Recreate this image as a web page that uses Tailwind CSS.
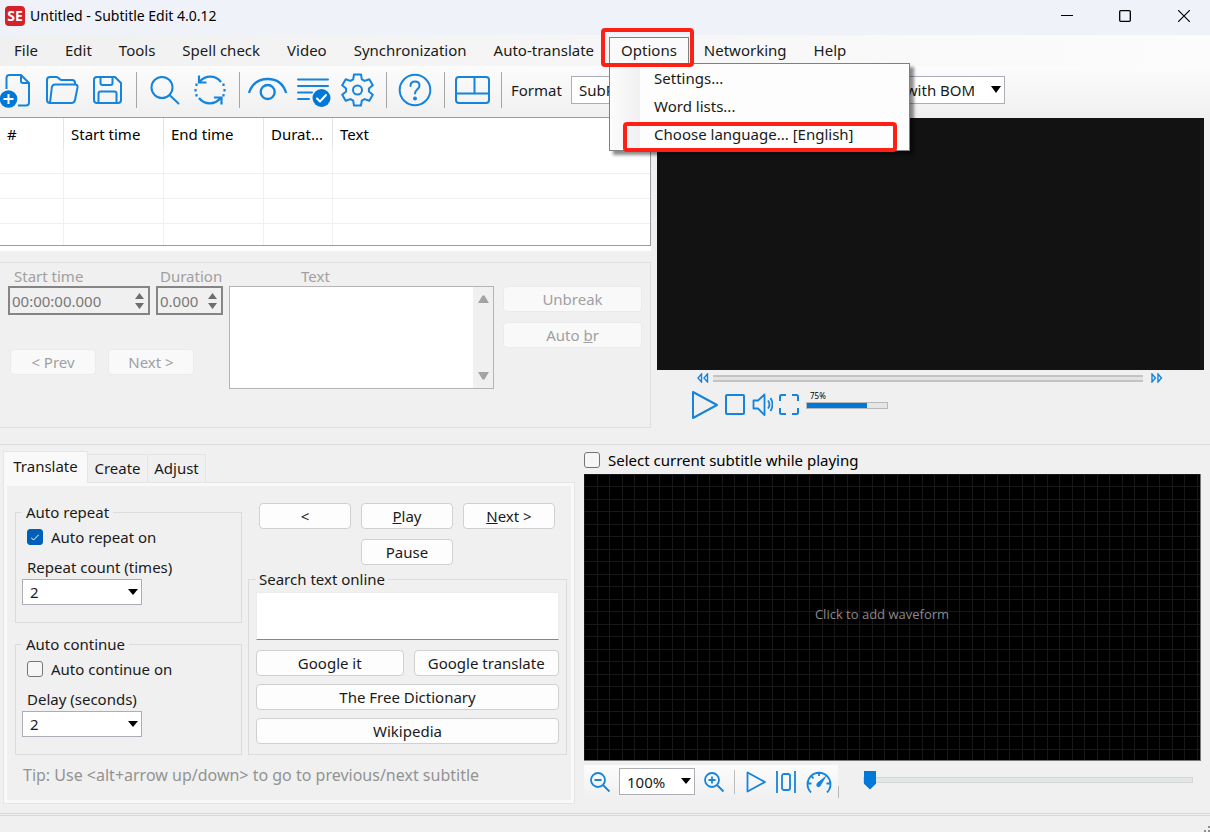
<!DOCTYPE html>
<html lang="en">
<head>
  <meta charset="UTF-8" />
  <meta name="viewport" content="width=device-width, initial-scale=1.0"/>
  <title>Untitled - Subtitle Edit 4.0.12</title>
  <script src="https://cdn.jsdelivr.net/npm/@tailwindcss/browser@4"></script>
</head>
<body class="min-h-screen flex flex-col bg-[#f0f0f0] font-['Noto_Sans',sans-serif] text-[15px] leading-5 text-[#1a1a1a]">

  <!-- Title bar -->
  <header class="h-[35px] flex items-center bg-[#eff3f9] pl-[5px]">
    <div class="size-5 shrink-0 mb-1 rounded bg-[#d3222a] text-white text-sm leading-5 font-bold text-center">SE</div>
    <h1 class="ml-[5px] mb-1 text-sm text-black">Untitled - Subtitle Edit 4.0.12</h1>
    <div class="ml-auto mb-1 flex">
      <button aria-label="Minimize" class="w-[58px] h-8 flex items-center justify-center">
        <svg class="size-3" viewBox="0 0 12 12" stroke="#000"><path d="M0 5.500h12"/></svg>
      </button>
      <button aria-label="Maximize" class="w-[58px] h-8 flex items-center justify-center">
        <svg class="size-3" viewBox="0 0 12 12" fill="none" stroke="#000" stroke-width="1.3"><rect x=".7" y=".7" width="10.6" height="10.6" rx="1"/></svg>
      </button>
      <button aria-label="Close" class="w-14 h-8 pl-1 flex items-center justify-center">
        <svg class="size-3" viewBox="0 0 12 12" stroke="#000" stroke-width="1.2"><path d="M0 0l12 12M12 0L0 12"/></svg>
      </button>
    </div>
  </header>

  <!-- Menu bar -->
  <nav class="h-[31px] flex items-center gap-[3px] bg-linear-to-r from-[#f0f0f0] to-[#fcfcfc] pl-0.5">
    <button class="h-[27px] px-3 pb-0.5">File</button>
    <button class="h-[27px] px-3 pb-0.5">Edit</button>
    <button class="h-[27px] px-3 pb-0.5">Tools</button>
    <button class="h-[27px] px-3 pb-0.5">Spell check</button>
    <button class="h-[27px] px-3 pb-0.5">Video</button>
    <button class="h-[27px] px-3 pb-0.5">Synchronization</button>
    <button class="h-[27px] px-3 pb-0.5">Auto-translate</button>
    <div class="relative">
      <button class="h-[27px] px-[11px] pb-0.5 border border-[#808080] bg-[#fafafa]">Options</button>
      <div class="absolute z-10 left-0 top-[26px] w-[301px] border border-[#808080] bg-[#fdfdfd] py-px shadow-[4px_4px_3px_rgba(0,0,0,0.45)]">
        <div class="bg-linear-to-r from-[#fcfcfc] to-[#f0f0f0] bg-size-[30px_100%] bg-no-repeat flex flex-col">
          <button class="h-7 pl-11 pb-0.5 text-left">Settings...</button>
          <button class="h-7 pl-11 pb-0.5 text-left">Word lists...</button>
          <button class="h-7 pl-11 pb-0.5 text-left">Choose language... [English]</button>
        </div>
        <div class="absolute left-[13px] right-3 bottom-[-2px] h-[30px] border-4 border-[#ff2015] rounded"></div>
      </div>
      <div class="absolute z-20 -left-2 -right-[5px] -top-[9px] h-[39px] border-4 border-[#ff2015] rounded"></div>
    </div>
    <button class="h-[27px] px-3 pb-0.5">Networking</button>
    <button class="h-[27px] px-3 pb-0.5">Help</button>
  </nav>

  <!-- Toolbar -->
  <div class="h-[51px] pb-1 flex items-center gap-2 bg-linear-to-b from-[#fcfcfc] to-[#f0f0f0]">
    <button aria-label="New"><svg class="w-[38px] h-9" viewBox="0 0 38 36" fill="none" stroke="#1484dc" stroke-width="2" stroke-linejoin="round">
      <path d="M6.500 17V6q0-3 3-3H21l8 8v19.500q0 3-3 3h-8M21 3v6q0 2 2 2h6"/>
      <circle cx="8.500" cy="27" r="8.800" fill="#0078d7" stroke="none"/><path d="M8.500 22v10M3.500 27h10" stroke="#fff"/></svg></button>
    <button aria-label="Open"><svg class="w-[38px] h-9" viewBox="0 0 38 36" fill="none" stroke="#1484dc" stroke-width="2" stroke-linejoin="round">
      <path d="M4 31q-3 0-3-3V8q0-3 3-3h6q1.500 0 2.500 1l1 1q1 1 2.500 1h10q3 0 3 3v1.500M4 31l1.800-15.500q.4-3 3.400-3h19.800q3 0 2.500 3l-2.500 12.500q-.6 3-3.600 3z"/></svg></button>
    <button aria-label="Save"><svg class="w-9 h-9" viewBox="0 0 36 36" fill="none" stroke="#1484dc" stroke-width="2" stroke-linejoin="round">
      <path d="M5 5h18l6 6v17q0 3-3 3H5q-3 0-3-3V8q0-3 3-3zM8.500 5v6q0 2 2 2h8q2 0 2-2V5M6.500 31V21.500q0-2 2-2h14q2 0 2 2V31"/></svg></button>
    <span class="w-px h-9 bg-[#a6a6a6]"></span>
    <button aria-label="Find"><svg class="w-10 h-9" viewBox="0 0 40 36" fill="none" stroke="#1484dc" stroke-width="2" stroke-linecap="round">
      <circle cx="17" cy="15.500" r="10.500"/><path d="M24.500 23l9 8.500"/></svg></button>
    <button aria-label="Replace"><svg class="w-[38px] h-9" viewBox="0 0 38 36" fill="none" stroke="#1484dc" stroke-width="2.200">
      <path d="M6.500 10A13.500 13.500 0 0 1 28 10M6 26a13.500 13.500 0 0 0 21.500 0M6 3.500v7h7.500M28.500 32.500V25.500H21"/>
      <path d="M30.500 11.500v2.500M31.500 17v2.500M30.500 22v2.500M3.500 11.500v2.500M2.500 17v2.500M3.500 22v2.500"/></svg></button>
    <span class="w-px h-9 bg-[#a6a6a6]"></span>
    <button aria-label="Visual sync"><svg class="w-10 h-9" viewBox="0 0 40 36" fill="none" stroke="#1484dc" stroke-width="2.300">
      <path d="M1 21C4 11.500 11 7 19.700 7s15.500 4.500 18.500 14"/><circle cx="19.700" cy="20" r="7"/></svg></button>
    <button aria-label="Spell check"><svg class="w-[37px] h-9" viewBox="0 0 37 36" fill="none" stroke="#1484dc" stroke-width="2" stroke-linecap="round" stroke-linejoin="round">
      <path d="M2 7.500h30M2 14h30M2 20.500h14M2 27h11"/><circle cx="25.500" cy="26" r="9" fill="#0078d7" stroke="none"/><path d="M21 26.500l3 3 6-6.500" stroke="#fff"/></svg></button>
    <button aria-label="Settings"><svg class="w-[37px] h-9" viewBox="-16.500 -18 37 36" fill="none" stroke="#1484dc" stroke-width="2" stroke-linejoin="round">
      <path d="M-4.300-10.700L-3.500-15.600H3.500L4.300-10.700 7.100-9.100 11.800-10.800 15.300-4.800 11.400-1.600V1.600L15.300 4.800 11.800 10.800 7.100 9.100 4.300 10.700 3.500 15.600H-3.500L-4.300 10.700-7.100 9.100-11.800 10.800-15.300 4.800-11.400 1.600V-1.600L-15.300-4.800-11.800-10.800-7.100-9.100z"/><circle r="4.500"/></svg></button>
    <span class="w-px h-9 bg-[#a6a6a6]"></span>
    <button aria-label="Help"><svg class="w-[41px] h-9" viewBox="0 0 41 36" fill="none" stroke="#1484dc" stroke-width="2" stroke-linecap="round">
      <circle cx="20" cy="18" r="15.300"/><path d="M15.500 14q0-4.500 4.500-4.500t4.500 4.200c0 3.500-4.500 3.600-4.500 7.800"/><circle cx="20" cy="26.500" r="1" fill="#1484dc"/></svg></button>
    <span class="w-px h-9 bg-[#a6a6a6]"></span>
    <button aria-label="Layout"><svg class="w-10 h-9" viewBox="0 0 40 36" fill="none" stroke="#1484dc" stroke-width="2">
      <rect x="3" y="5" width="33" height="26" rx="3"/><path d="M3 21.500h33M21.500 5v16.500"/></svg></button>
    <span class="w-px h-9 bg-[#a6a6a6]"></span>
    <label for="format" class="px-px">Format</label>
    <div class="relative w-[185px]">
      <select id="format" class="appearance-none w-full h-7 px-[7px] border border-[#acadb5] bg-white"><option>SubRip (.srt)</option></select>
    </div>
    <label for="encoding">Encoding</label>
    <div class="relative w-[168px]">
      <select id="encoding" class="appearance-none w-full h-7 pl-[23px] border border-[#acadb5] bg-white"><option>UTF-8 with BOM</option></select>
      <svg class="absolute right-1 top-[10px] w-2.5 h-[7px] pointer-events-none" viewBox="0 0 10 7"><path d="M0 0h10L5 7z"/></svg>
    </div>
  </div>

  <!-- List, edit box and video -->
  <main class="grid grid-cols-[651fr_559fr] h-[328px] border-b border-[#dcdcdc]">
    <div class="flex flex-col">
      <div class="bg-white pb-[5px]">
        <table class="w-full table-fixed border border-l-0 border-[#9a9ca5] border-separate border-spacing-0 text-left text-black">
          <colgroup><col class="w-16"><col class="w-[100px]"><col class="w-[100px]"><col class="w-[69px]"><col></colgroup>
          <thead>
            <tr class="h-[31px] *:font-normal *:pl-[7px] *:not-last:border-r *:border-[#e5e5e5]">
              <th>#</th><th>Start time</th><th>End time</th><th class="whitespace-nowrap">Durat...</th><th>Text</th>
            </tr>
          </thead>
          <tbody>
            <tr class="h-[25px] *:border-b *:not-last:border-r *:border-[#f0f0f0]"><td></td><td></td><td></td><td></td><td></td></tr>
            <tr class="h-[25px] *:border-b *:not-last:border-r *:border-[#f0f0f0]"><td></td><td></td><td></td><td></td><td></td></tr>
            <tr class="h-[25px] *:border-b *:not-last:border-r *:border-[#f0f0f0]"><td></td><td></td><td></td><td></td><td></td></tr>
            <tr class="h-[21px] *:not-last:border-r *:border-[#f0f0f0]"><td></td><td></td><td></td><td></td><td></td></tr>
          </tbody>
        </table>
      </div>

      <section class="mt-[11px] h-[166px] pt-[3px] pl-2 flex gap-1.5 border border-l-0 border-[#dfdfdf] text-[#a0a0a0]">
        <div>
          <div class="flex gap-1.5">
            <div class="w-[142px]">
              <label for="start" class="block pl-1.5">Start time</label>
              <div class="h-[29px] flex items-center border-2 border-[#858585] pl-0.5 pr-1">
                <input id="start" disabled value="00:00:00.000" class="min-w-0 flex-1 text-[#787878]" />
                <svg class="w-[9px] h-4" viewBox="0 0 9 16" fill="#6d6d6d"><path d="M0 6L4.500 0 9 6zM0 10h9l-4.500 6z"/></svg>
              </div>
            </div>
            <div class="w-[67px]">
              <label for="duration" class="block pl-1">Duration</label>
              <div class="h-[29px] flex items-center border-2 border-[#858585] pl-0.5 pr-1">
                <input id="duration" disabled value="0.000" class="min-w-0 flex-1 text-[#787878]" />
                <svg class="w-[9px] h-4" viewBox="0 0 9 16" fill="#6d6d6d"><path d="M0 6L4.500 0 9 6zM0 10h9l-4.500 6z"/></svg>
              </div>
            </div>
          </div>
          <div class="mt-[34px] pl-0.5 flex gap-3">
            <button disabled class="w-[86px] h-[26px] rounded border border-[#ebebeb] bg-[#f9f9f9]">&lt; Prev</button>
            <button disabled class="w-[86px] h-[26px] rounded border border-[#ebebeb] bg-[#f9f9f9]">Next &gt;</button>
          </div>
        </div>
        <div class="w-[265px]">
          <label for="text" class="block pl-[72px]">Text</label>
          <div class="h-[103px] flex border border-[#b4b4b4] bg-white">
            <textarea id="text" disabled class="flex-1 resize-none"></textarea>
            <div class="w-5 py-2 flex flex-col items-center justify-between bg-[#f0f0f0]">
              <svg class="w-[11px] h-2" viewBox="0 0 11 8" fill="#a3a3a3"><path d="M0 8L4.500.500h2L11 8z"/></svg>
              <svg class="w-[11px] h-2" viewBox="0 0 11 8" fill="#a3a3a3"><path d="M0 0l4.500 7.500h2L11 0z"/></svg>
            </div>
          </div>
        </div>
        <div class="flex-1 pt-5 pl-[3px] pr-2 flex flex-col gap-2.5">
          <button disabled class="h-[26px] rounded border border-[#ebebeb] bg-[#f9f9f9]">Unbreak</button>
          <button disabled class="h-[26px] rounded border border-[#ebebeb] bg-[#f9f9f9]">Auto <u>b</u>r</button>
        </div>
      </section>
    </div>

    <section class="pl-1.5 pr-1.5 pt-px">
      <div class="h-[252px] bg-[#121212]"></div>
      <div class="h-4 flex items-center gap-1 pl-10 pr-[41px]">
        <button aria-label="Rewind"><svg class="w-3 h-2.5" viewBox="0 0 12 10" fill="none" stroke="#1484dc" stroke-width="1.400"><path d="M4.500 1v8L1 5zM10.500 1v8L7 5z"/></svg></button>
        <input type="range" aria-label="Position" value="0" class="appearance-none flex-1 min-w-0 h-[7px] border-y-2 border-[#c3c3c3] bg-[#e3e3e3] [&::-webkit-slider-thumb]:appearance-none" />
        <button aria-label="Forward" class="pl-1"><svg class="w-3 h-2.5" viewBox="0 0 12 10" fill="none" stroke="#1484dc" stroke-width="1.400"><path d="M1 1v8l3.500-4zM7 1v8l3.500-4z"/></svg></button>
      </div>
      <div class="mt-1 h-[30px] flex items-center gap-1.5 pl-[34px]">
        <button aria-label="Play"><svg class="w-7 h-[30px]" viewBox="0 0 28 30" fill="none" stroke="#1484dc" stroke-width="2" stroke-linejoin="round"><path d="M2 2v26l24-13z"/></svg></button>
        <button aria-label="Stop"><svg class="w-[21px] h-[30px]" viewBox="0 0 21 30" fill="none" stroke="#1484dc" stroke-width="2"><rect x="1" y="5" width="18" height="19" rx="1"/></svg></button>
        <button aria-label="Mute"><svg class="w-[21px] h-[30px]" viewBox="0 0 21 30" fill="none" stroke="#1484dc" stroke-width="1.800" stroke-linejoin="round"><path d="M1.500 10.500v8h4.500l6.500 6.500V4.500l-6.500 6zM16 10.500q3 4 0 8M18.500 8q4 6.500 0 13"/></svg></button>
        <button aria-label="Full screen"><svg class="w-[21px] h-[30px]" viewBox="0 0 21 30" fill="none" stroke="#1484dc" stroke-width="2"><path d="M1 11V6.500q0-1.500 1.500-1.500H7M13 5h4.500Q19 5 19 6.500V11M19 18v4.500q0 1.500-1.500 1.500H13M7 24H2.500Q1 24 1 22.500V18"/></svg></button>
        <div class="w-[82px] h-[30px] flex flex-col">
          <label for="volume" class="pl-1 h-3 text-[8px] leading-3 text-black">75%</label>
          <input id="volume" type="range" value="75" class="appearance-none w-full h-[7px] border border-[#b9b9b9] bg-[#e6e6e6] bg-linear-to-r from-[#0078d7] to-[#0078d7] bg-no-repeat [&::-webkit-slider-thumb]:appearance-none" style="background-size: 75% 100%" />
        </div>
      </div>
    </section>
  </main>

  <!-- Tabs and waveform -->
  <div class="grid grid-cols-[584fr_626fr] flex-1">
    <section class="pl-[3px] pr-[9px] pt-1.5">
      <div class="flex items-end">
        <button class="relative -mb-px w-[85px] h-8 pb-1 border border-b-0 border-[#e5e5e5] bg-[#f9f9f9]">Translate</button>
        <button class="w-[60px] h-7 pb-0.5 border border-b-0 border-l-0 border-[#e5e5e5]">Create</button>
        <button class="w-[58px] h-7 pb-0.5 border border-b-0 border-l-0 border-[#e5e5e5]">Adjust</button>
      </div>
      <div class="border border-[#e5e5e5] bg-[#f9f9f9] p-[3px]">
        <div class="bg-[#f0f0f0] pl-2 pr-1 pt-4 pb-[15px]">
          <div class="flex gap-1.5">
            <div class="w-[227px] flex flex-col gap-[11px]">
              <fieldset class="border border-[#dcdcdc] px-1.5 pb-[17px]">
                <legend class="px-1">Auto repeat</legend>
                <label class="mt-[5px] pl-[5px] flex items-center gap-2">
                  <span class="relative size-4">
                    <input type="checkbox" checked class="appearance-none block size-4 rounded-[3px] border border-[#767676] bg-[#f6f6f6] checked:border-[#005fb8] checked:bg-[#005fb8]" />
                    <svg class="absolute left-1 top-1 size-2 pointer-events-none" viewBox="0 0 8 8" fill="none" stroke="#fff"><path d="M0 4.500l2.500 2.500L8 1.500"/></svg>
                  </span>
                  Auto repeat on
                </label>
                <label for="repeat" class="mt-2.5 pl-[5px] block">Repeat count (times)</label>
                <div class="relative mt-0.5 w-[120px]">
                  <select id="repeat" class="appearance-none block w-full h-[26px] px-[7px] border border-[#acadb5] bg-white"><option>2</option></select>
                  <svg class="absolute right-1 top-[10px] w-2.5 h-1.5 pointer-events-none" viewBox="0 0 10 6"><path d="M0 0h10L5 6z"/></svg>
                </div>
              </fieldset>
              <fieldset class="border border-[#dcdcdc] px-1.5 pb-[17px]">
                <legend class="px-1">Auto continue</legend>
                <label class="mt-[5px] pl-[5px] flex items-center gap-2">
                  <input type="checkbox" class="appearance-none block size-4 rounded-[3px] border border-[#767676] bg-[#f6f6f6]" />
                  Auto continue on
                </label>
                <label for="delay" class="mt-2.5 pl-[5px] block">Delay (seconds)</label>
                <div class="relative mt-0.5 w-[120px]">
                  <select id="delay" class="appearance-none block w-full h-[26px] px-[7px] border border-[#acadb5] bg-white"><option>2</option></select>
                  <svg class="absolute right-1 top-[10px] w-2.5 h-1.5 pointer-events-none" viewBox="0 0 10 6"><path d="M0 0h10L5 6z"/></svg>
                </div>
              </fieldset>
            </div>
            <div class="flex-1 pt-px">
              <div class="grid grid-cols-3 gap-x-2.5 gap-y-2.5 pl-[11px] pr-3">
                <button class="h-[26px] rounded border border-[#d0d0d0] bg-[#fdfdfd]">&lt;</button>
                <button class="h-[26px] rounded border border-[#d0d0d0] bg-[#fdfdfd]"><u>P</u>lay</button>
                <button class="h-[26px] rounded border border-[#d0d0d0] bg-[#fdfdfd]"><u>N</u>ext &gt;</button>
                <button class="col-start-2 h-[26px] rounded border border-[#d0d0d0] bg-[#fdfdfd]">Pause</button>
              </div>
              <fieldset class="mt-1 border border-[#dcdcdc] px-[7px] pb-2.5">
                <legend class="px-[3px]">Search text online</legend>
                <textarea aria-label="Search text" class="mt-[3px] block w-full h-12 resize-none bg-white border border-[#ececec] border-b-[#868686]"></textarea>
                <div class="mt-2.5 grid grid-cols-[147fr_145fr] gap-x-2.5 gap-y-2">
                  <button class="h-[26px] rounded border border-[#d0d0d0] bg-[#fdfdfd]">Google it</button>
                  <button class="h-[26px] rounded border border-[#d0d0d0] bg-[#fdfdfd] whitespace-nowrap">Google translate</button>
                  <button class="col-span-2 h-[26px] rounded border border-[#d0d0d0] bg-[#fdfdfd]">The Free Dictionary</button>
                  <button class="col-span-2 h-[26px] rounded border border-[#d0d0d0] bg-[#fdfdfd]">Wikipedia</button>
                </div>
              </fieldset>
            </div>
          </div>
          <p class="mt-2.5 pl-2 text-base leading-5 text-[#939393] whitespace-nowrap">Tip: Use &lt;alt+arrow up/down&gt; to go to previous/next subtitle</p>
        </div>
      </div>
    </section>

    <section class="pr-[9px]">
      <label class="h-[29px] flex items-center gap-2 text-black">
        <input type="checkbox" class="appearance-none size-4 rounded-[3px] border border-[#767676] bg-[#f6f6f6]" />
        Select current subtitle while playing
      </label>
      <div class="relative h-[287px] bg-black border-b border-r border-[#7a7a7a] flex items-center justify-center">
        <svg class="absolute inset-0 size-full" stroke="#181818">
          <defs><pattern id="grid" width="25" height="25" patternUnits="userSpaceOnUse"><path d="M.500 0v25M13.500 0v25M0 .500h25M0 12.500h25"/></pattern></defs>
          <rect width="100%" height="100%" fill="url(#grid)" stroke="none"/>
        </svg>
        <span class="relative pb-1.5 pr-5 font-['Open_Sans',sans-serif] text-[13px] text-[#8a8a8a]">Click to add waveform</span>
      </div>
      <div class="mt-1 h-[33px] flex">
        <div class="w-[254px] flex items-center gap-[9px] pl-1.5 bg-linear-to-b from-[#fcfcfc] to-[#f0f0f0]">
          <button aria-label="Zoom out"><svg class="w-5 h-[22px]" viewBox="0 0 20 22" fill="none" stroke="#1484dc" stroke-width="1.800"><circle cx="8" cy="9" r="7"/><path d="M4.500 9h7M13 14l6.500 6.500"/></svg></button>
          <div class="relative w-[76px]">
            <select aria-label="Zoom" class="appearance-none block w-full h-[27px] px-[7px] border border-[#acadb5] bg-white"><option>100%</option></select>
            <svg class="absolute right-1 top-[10px] w-2.5 h-1.5 pointer-events-none" viewBox="0 0 10 6"><path d="M0 0h10L5 6z"/></svg>
          </div>
          <button aria-label="Zoom in"><svg class="w-[21px] h-[22px]" viewBox="0 0 21 22" fill="none" stroke="#1484dc" stroke-width="1.800"><circle cx="8" cy="9" r="7"/><path d="M4.500 9h7M8 5.500v7M13 14l6.500 6.500"/></svg></button>
          <span class="w-px h-6 bg-[#bdbdbd]"></span>
          <button aria-label="Play waveform" class="pl-0.5"><svg class="w-5 h-[22px]" viewBox="0 0 20 22" fill="none" stroke="#1484dc" stroke-width="1.800" stroke-linejoin="round"><path d="M1.500 1.500v19L19 11z"/></svg></button>
          <button aria-label="Center"><svg class="w-[22px] h-[22px]" viewBox="0 0 22 22" fill="none" stroke="#1484dc" stroke-width="1.800"><path d="M2 0v22M20 0v22"/><rect x="7" y="3" width="8" height="16" rx="2"/></svg></button>
          <button aria-label="Speed"><svg class="w-[26px] h-[22px]" viewBox="0 0 26 22" fill="none" stroke="#1484dc" stroke-width="1.800"><path d="M5 21.500A11.500 11.500 0 1 1 21 21.500M13 1v4M5 4.500l2.500 3M1.500 12.500h4M20.500 12.500h4"/><path d="M21 4l-6.500 11q-2 2-3.500.500t0-3.500z" fill="#1484dc" stroke="none"/></svg></button>
        </div>
        <span class="w-px h-3 self-end bg-[#b5b5b5]"></span>
        <input type="range" aria-label="Speed" value="0" class="appearance-none ml-6 mr-2 flex-1 min-w-0 h-[29px] [&::-webkit-slider-runnable-track]:h-1.5 [&::-webkit-slider-runnable-track]:border [&::-webkit-slider-runnable-track]:border-[#d3d7d9] [&::-webkit-slider-runnable-track]:bg-[#e4e6e6] [&::-webkit-slider-thumb]:appearance-none [&::-webkit-slider-thumb]:w-3 [&::-webkit-slider-thumb]:h-[19px] [&::-webkit-slider-thumb]:-mt-[7px] [&::-webkit-slider-thumb]:bg-[#0078d7] [&::-webkit-slider-thumb]:[clip-path:polygon(0_0,100%_0,100%_70%,50%_100%,0_70%)]" />
      </div>
    </section>
  </div>

  <!-- Status bar -->
  <footer class="h-[19px] flex items-end justify-end border-t-[3px] border-double border-[#d7d7d7]">
    <svg class="w-1.5 h-1.5" viewBox="0 0 6 6" fill="#8f8f8f"><path d="M4 0h2v2H4zM4 4h2v2H4zM0 4h2v2H0z"/></svg>
  </footer>
</body>
</html>
